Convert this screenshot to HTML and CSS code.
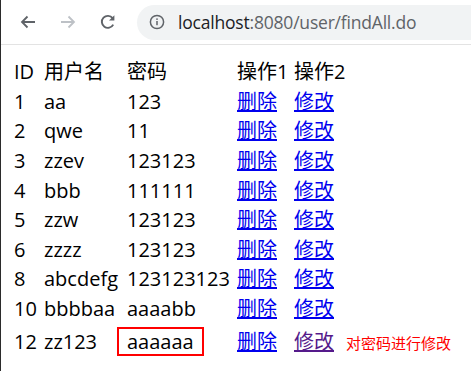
FILE: index.html
```html
<!DOCTYPE html>
<html lang="zh-CN">
<head>
    <meta charset="UTF-8">
    <title>findAll</title>
    <link rel="stylesheet" href="styles.css">
</head>
<body>
    <div class="toolbar">
        <div class="nav-btn">
            <svg width="20" height="20" viewBox="0 0 20 20"><path d="M17 10H4M9.5 4.5L4 10l5.5 5.5" fill="none" stroke="#5f6368" stroke-width="1.8"/></svg>
        </div>
        <div class="nav-btn">
            <svg width="20" height="20" viewBox="0 0 20 20"><path d="M3 10h13M10.5 4.5L16 10l-5.5 5.5" fill="none" stroke="#bdc1c6" stroke-width="1.8"/></svg>
        </div>
        <div class="nav-btn">
            <svg width="20" height="20" viewBox="0 0 20 20"><path d="M15.2 12.6A6 6 0 1 1 14.6 6.2" fill="none" stroke="#5f6368" stroke-width="1.9"/><path d="M16.4 3.2v5.4H11z" fill="#5f6368"/></svg>
        </div>
        <div class="omnibox">
            <svg class="info" width="16" height="16" viewBox="0 0 16 16"><circle cx="8" cy="8" r="6.6" fill="none" stroke="#5f6368" stroke-width="1.5"/><rect x="7.25" y="7" width="1.5" height="4.2" fill="#5f6368"/><rect x="7.25" y="4.4" width="1.5" height="1.5" fill="#5f6368"/></svg>
            <span class="host">localhost</span><span class="path">:8080/user/findAll.do</span>
        </div>
    </div>

    <div class="page">
        <table class="users">
            <tr>
                <td class="c-id">ID</td>
                <td class="c-name">用户名</td>
                <td class="c-pwd">密码</td>
                <td class="c-op1">操作1</td>
                <td class="c-op2">操作2</td>
                <td></td>
            </tr>
            <tr><td>1</td><td>aa</td><td>123</td><td><a href="#">删除</a></td><td><a href="#">修改</a></td><td></td></tr>
            <tr><td>2</td><td>qwe</td><td>11</td><td><a href="#">删除</a></td><td><a href="#">修改</a></td><td></td></tr>
            <tr><td>3</td><td>zzev</td><td>123123</td><td><a href="#">删除</a></td><td><a href="#">修改</a></td><td></td></tr>
            <tr><td>4</td><td>bbb</td><td>111111</td><td><a href="#">删除</a></td><td><a href="#">修改</a></td><td></td></tr>
            <tr><td>5</td><td>zzw</td><td>123123</td><td><a href="#">删除</a></td><td><a href="#">修改</a></td><td></td></tr>
            <tr><td>6</td><td>zzzz</td><td>123123</td><td><a href="#">删除</a></td><td><a href="#">修改</a></td><td></td></tr>
            <tr><td>8</td><td>abcdefg</td><td>123123123</td><td><a href="#">删除</a></td><td><a href="#">修改</a></td><td></td></tr>
            <tr><td>10</td><td>bbbbaa</td><td>aaaabb</td><td><a href="#">删除</a></td><td><a href="#">修改</a></td><td></td></tr>
            <tr class="last">
                <td>12</td>
                <td>zz123</td>
                <td><span class="marked">aaaaaa</span></td>
                <td><a href="#">删除</a></td>
                <td><a href="#" class="visited">修改</a></td>
                <td><span class="note">对密码进行修改</span></td>
            </tr>
        </table>
    </div>
</body>
</html>
```

FILE: styles.css
```css
body {
    margin: 0;
    background: #fff;
    border-left: 1px solid #2b2b2b;
    height: 371px;
    box-sizing: border-box;
    overflow: hidden;
}

.toolbar {
    height: 45px;
    border-bottom: 1px solid #e3e3e3;
    display: flex;
    align-items: center;
    padding-left: 17px;
    box-sizing: border-box;
}

.nav-btn {
    width: 20px;
    height: 20px;
    margin-right: 20px;
}

.omnibox {
    flex: 1;
    height: 35px;
    margin-left: -1px;
    background: #f1f3f4;
    border-radius: 18px 0 0 18px;
    display: flex;
    align-items: center;
    padding-left: 12px;
    font-family: "Open Sans", "Noto Sans", sans-serif;
    font-size: 17.5px;
    letter-spacing: -0.2px;
}

.info {
    margin-right: 13px;
}

.host {
    color: #202124;
}

.path {
    color: #5f6368;
}

.page {
    padding: 12px 0 0 13px;
}

.users {
    border-collapse: collapse;
    font-family: "Open Sans", "Noto Sans CJK SC", sans-serif;
    font-size: 20px;
    color: #000;
}

.users td {
    padding: 0;
    height: 29.6px;
    line-height: 29px;
    white-space: nowrap;
    vertical-align: middle;
}

.c-id { width: 30px; }
.c-name { width: 83px; }
.c-pwd { width: 110px; }
.c-op1 { width: 57px; }
.c-op2 { width: 52px; }

.users a {
    color: #0000ee;
    text-decoration-thickness: 2px;
}

.users a.visited {
    color: #551a8b;
}

.users tr.last td {
    height: 37px;
}

.marked {
    display: inline-block;
    border: 2px solid #f00;
    line-height: 25px;
    padding: 0 8px 0 8px;
    margin-left: -10px;
}

.note {
    color: #f00;
    font-size: 15px;
    font-family: "Noto Sans CJK SC", sans-serif;
}
```
